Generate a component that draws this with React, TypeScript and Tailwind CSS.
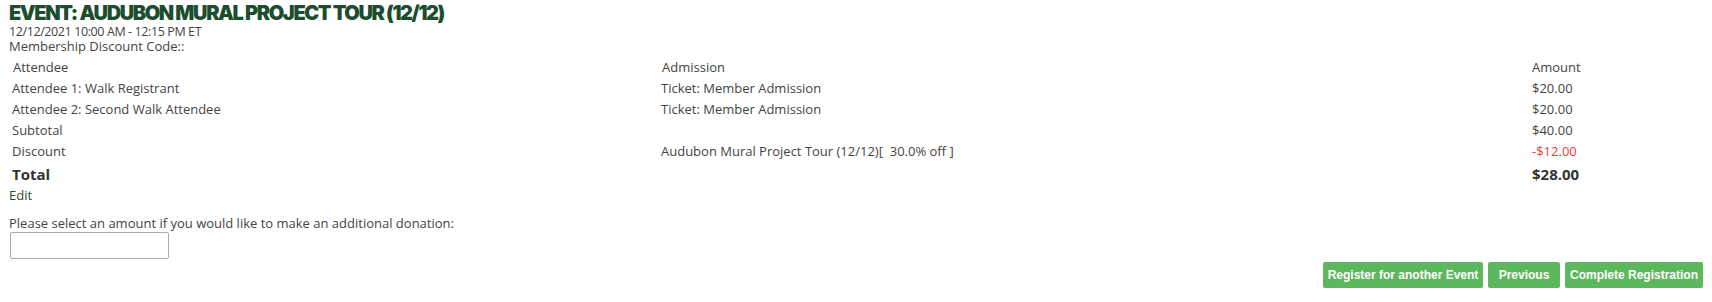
import React from "react";

const body = { fontFamily: '"Open Sans", "Liberation Sans", sans-serif' };

export default function App() {
  const rows: [string, string, string, string?][] = [
    ["Attendee 1: Walk Registrant", "Ticket: Member Admission", "$20.00"],
    ["Attendee 2: Second Walk Attendee", "Ticket: Member Admission", "$20.00"],
    ["Subtotal", "", "$40.00"],
    ["Discount", "Audubon Mural Project Tour (12/12)[  30.0% off ]", "-$12.00", "red"],
  ];
  return (
    <div className="w-[1712px] h-[302px] bg-white text-[#444] px-[9px] pt-[2px]" style={body}>
      <h1
        className="text-[20px] leading-[22px] font-black text-[#1b4d2e] tracking-[-1.4px]"
        style={{ fontFamily: '"Inter", "Open Sans", sans-serif' }}
      >
        EVENT: AUDUBON MURAL PROJECT TOUR (12/12)
      </h1>
      <div className="text-[12.5px] leading-[15px] tracking-[-0.4px]">12/12/2021 10:00 AM - 12:15 PM ET</div>
      <div className="text-[13px] leading-[15px]">Membership Discount Code::</div>
      <div className="mt-[3px] text-[13px]">
        <div className="grid grid-cols-[652px_871px_1fr] h-[21px] items-center">
          <div className="pl-[4px]">Attendee</div>
          <div className="pl-[1px]">Admission</div>
          <div>Amount</div>
        </div>
        {rows.map(([a, b, c, red]) => (
          <div key={a} className="grid grid-cols-[652px_871px_1fr] h-[21px] items-center">
            <div className="pl-[3px]">{a}</div>
            <div className="whitespace-pre">{b}</div>
            <div className={red ? "text-[#ff3333]" : ""}>{c}</div>
          </div>
        ))}
        <div className="grid grid-cols-[652px_871px_1fr] h-[24px] items-center font-bold text-[15px] text-[#333]">
          <div className="pl-[3px]">Total</div>
          <div></div>
          <div>$28.00</div>
        </div>
      </div>
      <div className="text-[13px] leading-[18px] text-[#2d4a2f]">Edit</div>
      <div className="mt-[11px] text-[13px] leading-[16px]">
        Please select an amount if you would like to make an additional donation:
      </div>
      <input
        type="text"
        className="block w-[159px] h-[27px] border border-[#a9a9a9] rounded-[2px] mt-[1px] ml-[1px]"
      />
      <div className="flex justify-end gap-[5px] mt-[3px]" style={{ fontFamily: '"Liberation Sans", Arial, sans-serif' }}>
        <button className="h-[26px] w-[160px] bg-[#5cb85c] text-white text-[12px] font-bold rounded-[2px]">
          Register for another Event
        </button>
        <button className="h-[26px] w-[72px] bg-[#5cb85c] text-white text-[12px] font-bold rounded-[2px]">
          Previous
        </button>
        <button className="h-[26px] w-[138px] bg-[#5cb85c] text-white text-[12px] font-bold rounded-[2px]">
          Complete Registration
        </button>
      </div>
    </div>
  );
}
